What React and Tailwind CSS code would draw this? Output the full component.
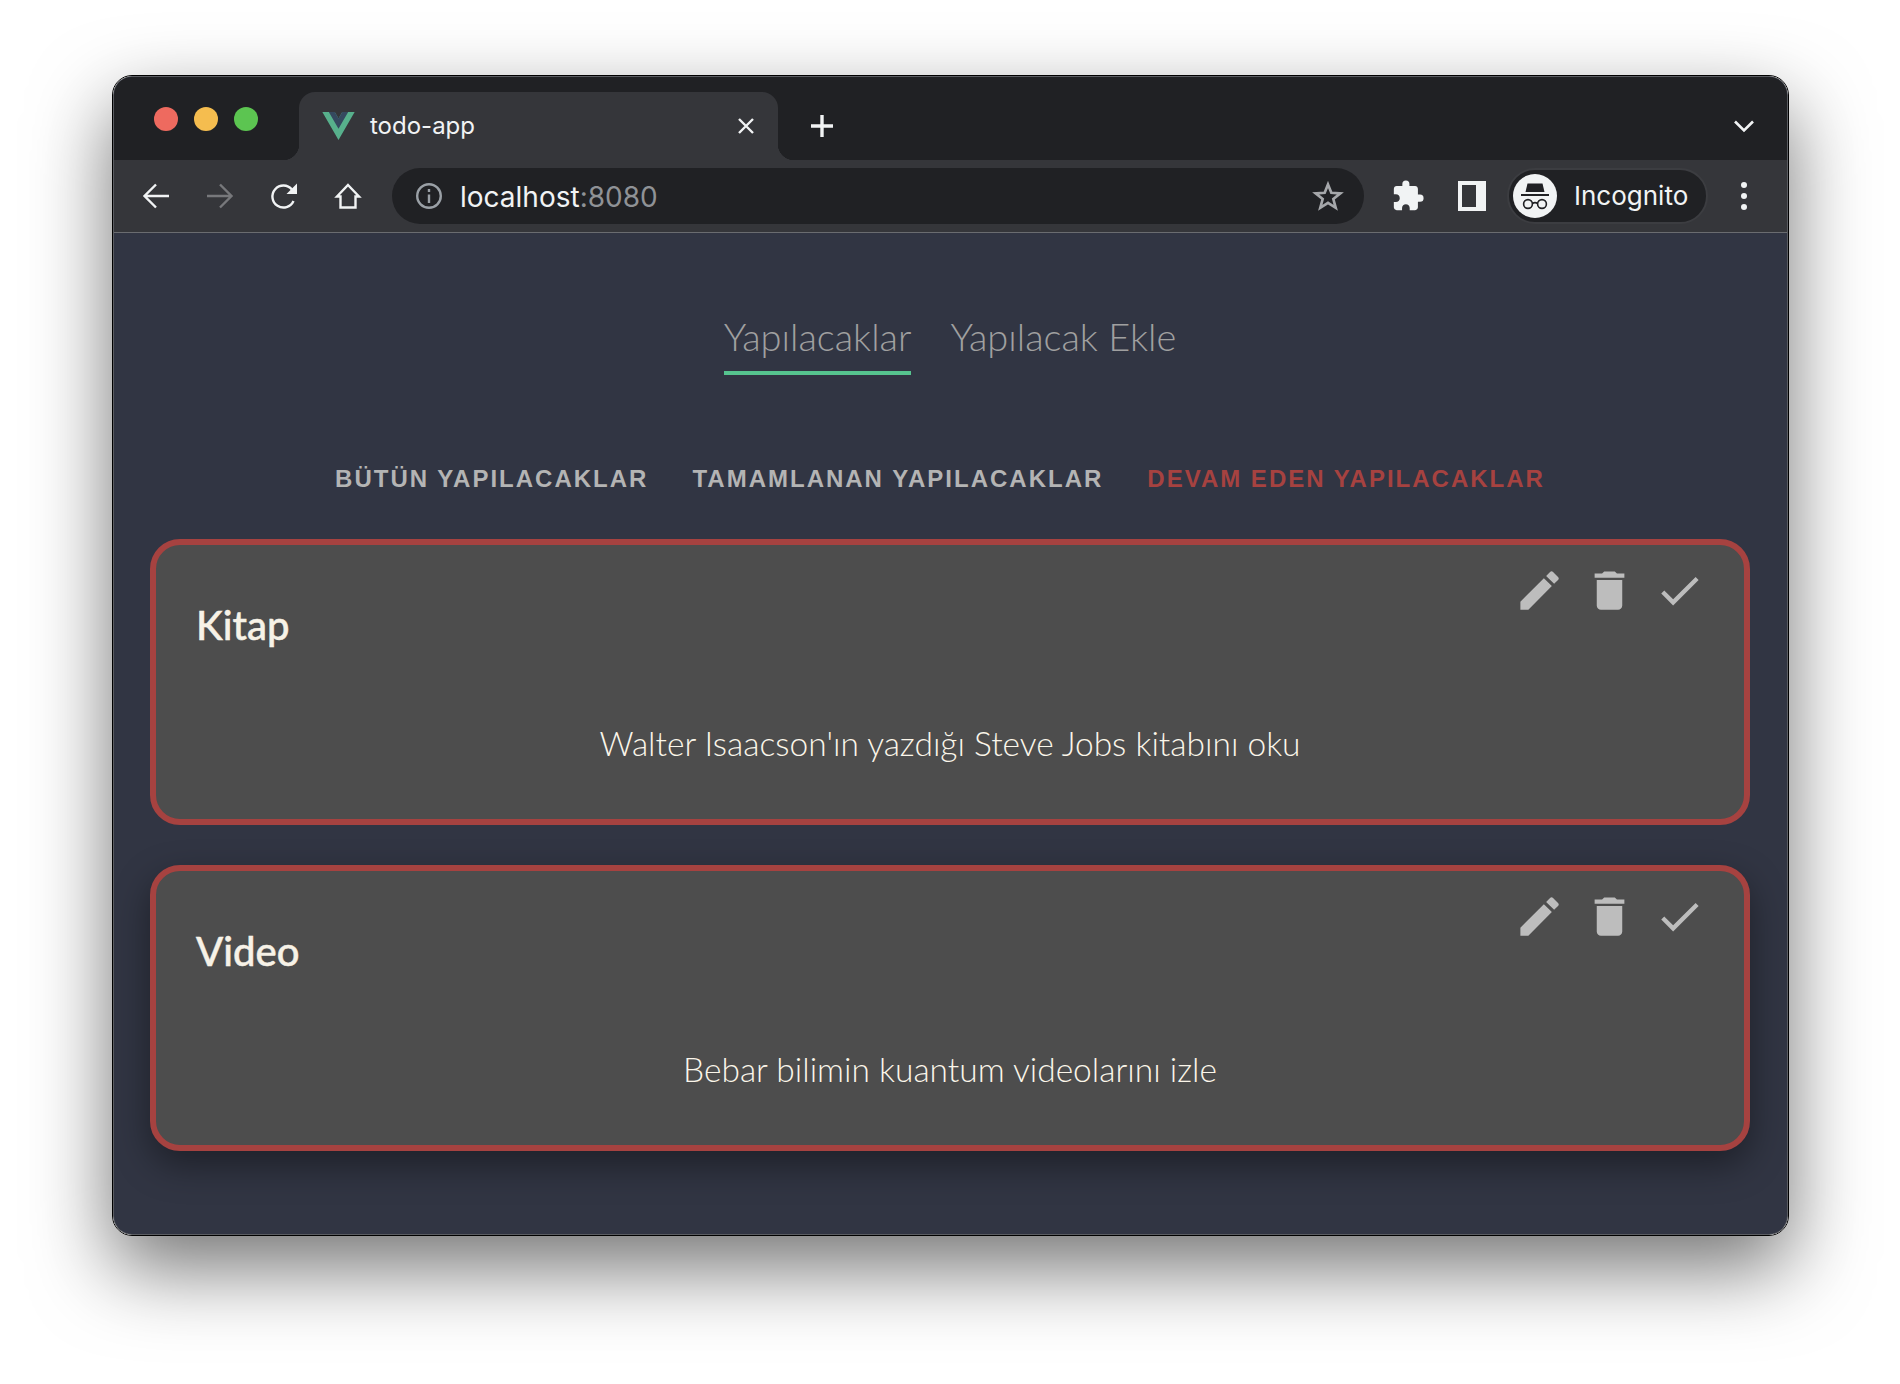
import { MdEdit, MdDelete, MdCheck, MdExtension } from 'react-icons/md';

const todos = [
  { title: 'Kitap', text: "Walter Isaacson'ın yazdığı Steve Jobs kitabını oku" },
  { title: 'Video', text: 'Bebar bilimin kuantum videolarını izle', hovered: true }
];

function VueLogo() {
  return (
    <svg viewBox="0 0 261.76 226.69" className="w-[33px] h-[28px]">
      <path d="M161.096.001l-30.225 52.351L100.647.001H-.005l130.877 226.688L261.749.001z" fill="#57b08c" />
      <path d="M161.096.001l-30.225 52.351L100.647.001H52.346l78.526 136.01L209.398.001z" fill="#35495f" />
    </svg>
  );
}

function Arrow({ flip, color }) {
  return (
    <svg viewBox="0 0 28 28" className={flip ? 'w-7 h-7 -scale-x-100' : 'w-7 h-7'} fill="none" stroke={color} strokeWidth="2.4">
      <path d="M27 14H3M14 2.5 2.5 14 14 25.5" />
    </svg>
  );
}

function Reload() {
  return (
    <svg viewBox="0 0 28 28" className="w-7 h-7" fill="none">
      <path d="M23.5 19a11 11 0 1 1-1.6-11.5" stroke="#f1f3f4" strokeWidth="2.4" />
      <path d="M27 1.5V12H16.5z" fill="#f1f3f4" />
    </svg>
  );
}

function Home() {
  return (
    <svg viewBox="0 0 28 28" className="w-7 h-7" fill="none" stroke="#f1f3f4" strokeWidth="2.4">
      <path d="M14 3 25 14.5H21.5V25.5H6.5V14.5H3z" />
    </svg>
  );
}

function Incognito() {
  return (
    <svg viewBox="0 0 44 44" className="w-11 h-11">
      <circle cx="22" cy="22" r="22" fill="#f1f3f4" />
      <path d="M14.5 9.5h15l2 8.5h-19z" fill="#202124" />
      <path d="M8 20h28v2H8z" fill="#202124" />
      <g fill="none" stroke="#202124" strokeWidth="1.6">
        <circle cx="15" cy="30" r="4.4" />
        <circle cx="29" cy="30" r="4.4" />
        <path d="M19.4 29.5c1.5-1 3.700-1 5.200 0" />
      </g>
    </svg>
  );
}

function TodoCard({ title, text, hovered }) {
  return (
    <div className={`h-[286px] rounded-[30px] border-[6px] border-[#a64240] bg-[#4d4d4d] ${hovered ? 'shadow-[0_14px_36px_rgba(0,0,0,0.4)]' : ''}`}>
      <div className="flex justify-between items-start pl-[40px] pr-[39px]">
        <h3 className="mt-[58px] text-[40px] leading-[44px] font-medium [-webkit-text-stroke:0.5px_#f7f2e7] text-[#f7f2e7]">{title}</h3>
        <div className="mt-[20px] flex gap-[19px] text-[#bdbdbd]">
          <MdEdit size={51} />
          <MdDelete size={51} />
          <MdCheck size={51} />
        </div>
      </div>
      <p className="mt-[76px] text-center text-[33.5px] leading-[40px] font-light text-[#fbf6ea]">{text}</p>
    </div>
  );
}

export default function App() {
  return (
    <div className="min-h-[1384px] bg-white pl-[112px] pt-[75px] font-['Lato',sans-serif]">
      <div className="w-[1677px] h-[1161px] rounded-[20px] border border-black shadow-[0_32px_80px_rgba(0,0,0,0.55)] overflow-hidden">
        <div className="h-full flex flex-col rounded-[19px] border border-[#5b5d62] bg-[#313543] overflow-hidden font-['Inter',sans-serif]">
          {/* title bar */}
          <div className="h-[83px] shrink-0 flex items-end bg-[#202124]">
            <div className="self-start mt-[30px] ml-[40px] flex gap-[16px]">
              <span className="w-6 h-6 rounded-full bg-[#ee6a5f]" />
              <span className="w-6 h-6 rounded-full bg-[#f5bd4f]" />
              <span className="w-6 h-6 rounded-full bg-[#5cc551]" />
            </div>
            <div className="relative ml-[41px] w-[479px] h-[68px] flex items-center pl-[23px] pr-[23px] rounded-t-[16px] bg-[#35363a] before:absolute before:bottom-0 before:-left-4 before:w-4 before:h-4 before:bg-[radial-gradient(circle_at_0_0,transparent_16px,#35363a_16.5px)] after:absolute after:bottom-0 after:-right-4 after:w-4 after:h-4 after:bg-[radial-gradient(circle_at_100%_0,transparent_16px,#35363a_16.5px)]">
              <VueLogo />
              <span className="ml-[15px] text-[24px] text-[#f1f3f4]">todo-app</span>
              <svg viewBox="0 0 18 18" className="ml-auto w-[18px] h-[18px]" stroke="#f1f3f4" strokeWidth="2.4">
                <path d="M2 2l14 14M16 2 2 16" />
              </svg>
            </div>
            <svg viewBox="0 0 24 24" className="mb-[22px] ml-[32px] w-6 h-6" stroke="#f1f3f4" strokeWidth="3.4">
              <path d="M12 1v22M1 12h22" />
            </svg>
            <svg viewBox="0 0 24 24" className="ml-auto mb-[22px] mr-[31px] w-6 h-6" fill="none" stroke="#f1f3f4" strokeWidth="2.6">
              <path d="M3 7.500 12 16.500 21 7.500" />
            </svg>
          </div>

          {/* toolbar */}
          <div className="h-[73px] shrink-0 flex items-center pl-[10px] bg-[#35363a] border-b border-[#6a6c70] pb-[1px]">
            <div className="w-16 flex justify-center"><Arrow color="#f1f3f4" /></div>
            <div className="w-16 flex justify-center"><Arrow flip color="#77787b" /></div>
            <div className="w-16 flex justify-center"><Reload /></div>
            <div className="w-16 flex justify-center"><Home /></div>
            <div className="ml-3 w-[972px] h-[56px] flex items-center rounded-full bg-[#202124] pl-[23px] pr-[20px]">
              <svg viewBox="0 0 28 28" className="w-7 h-7" fill="none" stroke="#9aa0a6" strokeWidth="2.4">
                <circle cx="14" cy="14" r="11.800" />
                <path d="M14 12.500V21M14 7v3" />
              </svg>
              <span className="ml-[17px] mt-[2px] text-[28px] text-[#f1f3f4]">localhost<span className="text-[#8f9296]">:8080</span></span>
              <svg viewBox="0 0 24 24" className="ml-auto w-[32px] h-[32px]" fill="none" stroke="#a5a7aa" strokeWidth="2" strokeLinejoin="miter">
                <path d="M12 3.300 14.500 9.600 21.300 10 16 14.300 17.800 20.900 12 17.200 6.200 20.900 8 14.300 2.700 10 9.500 9.600z" />
              </svg>
            </div>
            <div className="ml-[12px] w-16 flex justify-center text-[#f1f3f4]"><MdExtension size={34} /></div>
            <div className="w-16 flex justify-center">
              <svg viewBox="0 0 28 30" className="w-[28px] h-[30px]">
                <path fillRule="evenodd" d="M0 0h28v30H0zM4 4v22h14V4z" fill="#f1f3f4" />
              </svg>
            </div>
            <div className="ml-[3px] w-[201px] h-[56px] flex items-center rounded-full bg-[#202124] border-2 border-[#3c3d41] pl-[4px]">
              <Incognito />
              <span className="ml-[17px] text-[26px] text-[#f1f3f4]">Incognito</span>
            </div>
            <div className="ml-[33px] flex flex-col gap-[5px]">
              <span className="w-[6px] h-[6px] rounded-full bg-[#f1f3f4]" />
              <span className="w-[6px] h-[6px] rounded-full bg-[#f1f3f4]" />
              <span className="w-[6px] h-[6px] rounded-full bg-[#f1f3f4]" />
            </div>
          </div>

          {/* page */}
          <main className="flex-1 pt-[81px] pl-[36px] pr-[37px] font-['Lato',sans-serif]">
            <nav className="flex justify-center gap-[39px] text-[38px] leading-[44px] font-light text-[#a0a0a0]">
              <a className="pb-[13px] border-b-4 border-[#56c48f]">Yapılacaklar</a>
              <a className="pb-[13px] border-b-4 border-transparent">Yapılacak Ekle</a>
            </nav>
            <div className="mt-[90px] mr-[20px] flex justify-center gap-[44px] font-['Liberation_Sans',sans-serif] font-bold text-[24px] leading-[28px] tracking-[2px] text-[#b4b4b4]">
              <span>BÜTÜN YAPILACAKLAR</span>
              <span>TAMAMLANAN YAPILACAKLAR</span>
              <span className="text-[#a64240]">DEVAM EDEN YAPILACAKLAR</span>
            </div>
            <div className="mt-[46px] flex flex-col gap-[40px]">
              {todos.map(todo => (
                <TodoCard key={todo.title} {...todo} />
              ))}
            </div>
          </main>
        </div>
      </div>
    </div>
  );
}
